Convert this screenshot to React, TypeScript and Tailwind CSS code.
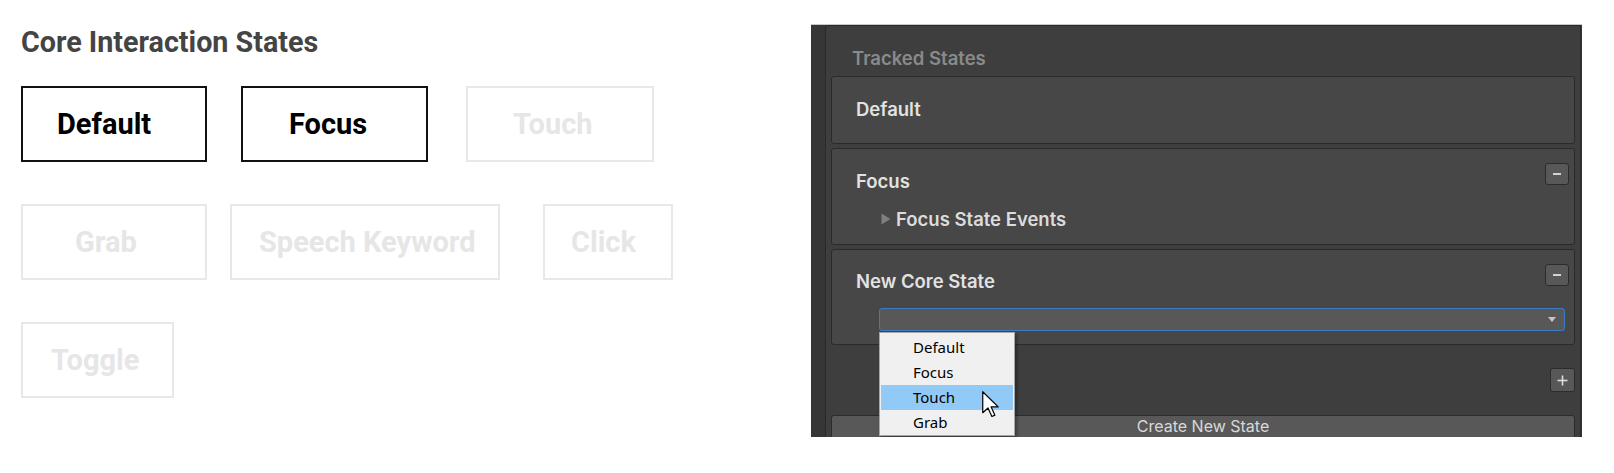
import React from "react";

const roboto = { fontFamily: "Roboto, 'Liberation Sans', sans-serif" };
const inter = { fontFamily: "Inter, 'Noto Sans', sans-serif" };
const noto = { fontFamily: "'Noto Sans', 'Open Sans', sans-serif" };

type Btn = { label: string; w: string; ml: string; pl: string; active?: boolean };

function StateBox({ b }: { b: Btn }) {
  return (
    <div
      className={`flex h-[76px] shrink-0 items-center border-2 ${b.w} ${b.ml} ${b.pl} ${
        b.active ? "border-[#111111] text-black" : "border-[#e8e8e8] text-[#e6e6e6]"
      }`}
    >
      <span className="whitespace-nowrap text-[29px] font-bold leading-[29px]" style={roboto}>
        {b.label}
      </span>
    </div>
  );
}

function MiniButton({ children, w, h }: { children: React.ReactNode; w: string; h: string }) {
  return (
    <div
      className={`flex shrink-0 items-center justify-center rounded-[3px] border border-[#2c2c2c] bg-[#585858] ${w} ${h}`}
    >
      {children}
    </div>
  );
}

function Minus() {
  return (
    <MiniButton w="w-[24px]" h="h-[22px]">
      <div className="h-[2px] w-[8px] bg-[#d2d2d2]" />
    </MiniButton>
  );
}

export default function App() {
  const row1: Btn[] = [
    { label: "Default", w: "w-[186px]", ml: "ml-0", pl: "pl-[34px]", active: true },
    { label: "Focus", w: "w-[187px]", ml: "ml-[34px]", pl: "pl-[46px]", active: true },
    { label: "Touch", w: "w-[188px]", ml: "ml-[38px]", pl: "pl-[45px]" },
  ];
  const row2: Btn[] = [
    { label: "Grab", w: "w-[186px]", ml: "ml-0", pl: "pl-[52px]" },
    { label: "Speech Keyword", w: "w-[270px]", ml: "ml-[23px]", pl: "pl-[27px]" },
    { label: "Click", w: "w-[130px]", ml: "ml-[43px]", pl: "pl-[26px]" },
  ];
  const row3: Btn[] = [{ label: "Toggle", w: "w-[153px]", ml: "ml-0", pl: "pl-[28px]" }];

  return (
    <div className="flex h-[473px] w-[1614px] overflow-hidden bg-white">
      {/* Left: Core interaction states */}
      <div className="w-[811px] shrink-0 pl-[21px] pt-[28px]">
        <h1 className="whitespace-nowrap text-[28.7px] font-bold leading-[28px] text-[#444444]" style={roboto}>
          Core Interaction States
        </h1>
        <div className="mt-[30px] flex flex-col gap-[42px]">
          <div className="flex">
            {row1.map((b) => (
              <StateBox key={b.label} b={b} />
            ))}
          </div>
          <div className="flex">
            {row2.map((b) => (
              <StateBox key={b.label} b={b} />
            ))}
          </div>
          <div className="flex">
            {row3.map((b) => (
              <StateBox key={b.label} b={b} />
            ))}
          </div>
        </div>
      </div>

      {/* Right: Unity-like inspector panel */}
      <div
        className="mt-[24px] flex h-[413px] w-[771px] shrink-0 overflow-hidden border-t border-[#c9c9c9] bg-[#363636]"
        style={inter}
      >
        <div className="w-[14px] shrink-0" />
        <div className="flex w-[756px] shrink-0 flex-col rounded-tl-[4px] border-l border-r border-t border-[#2a2a2a] bg-[#3e3e3e] px-[5px] pt-[23px]">
          <div className="shrink-0 pl-[21px] text-[18.5px] font-semibold leading-[18px] text-[#8a8a8a]">
            Tracked States
          </div>

          {/* Default card */}
          <div className="mt-[9px] h-[68px] shrink-0 rounded-[3px] border border-[#2a2a2a] bg-[#474747] pl-[24px] pt-[23px]">
            <div className="text-[18.5px] font-semibold leading-[18px] text-[#e2e2e2]">Default</div>
          </div>

          {/* Focus card */}
          <div className="mt-[4px] h-[97px] shrink-0 rounded-[3px] border border-[#2a2a2a] bg-[#474747] pr-[5px] pt-[14px]">
            <div className="flex items-start justify-between">
              <div className="mt-[9px] pl-[24px] text-[18.5px] font-semibold leading-[18px] text-[#e2e2e2]">Focus</div>
              <Minus />
            </div>
            <div className="mt-[20px] flex items-center pl-[49px]">
              <svg width="10" height="12" viewBox="0 0 10 12" className="shrink-0">
                <polygon points="0.5,0.5 9.5,6 0.5,11.5" fill="#7f7f7f" />
              </svg>
              <span className="ml-[5px] text-[18.5px] font-semibold leading-[18px] text-[#dcdcdc]">
                Focus State Events
              </span>
            </div>
          </div>

          {/* New Core State card */}
          <div className="relative z-10 mt-[4px] h-[96px] shrink-0 rounded-[3px] border border-[#2a2a2a] bg-[#474747] pr-[5px] pt-[14px]">
            <div className="flex items-start justify-between">
              <div className="mt-[8px] pl-[24px] text-[18.5px] font-semibold leading-[18px] text-[#e2e2e2]">
                New Core State
              </div>
              <Minus />
            </div>
            <div className="relative ml-[47px] mr-[4px] mt-[18px]">
              <div className="flex h-[23px] items-center justify-end rounded-[3px] border border-[#3b7bc6] bg-[#585858] pr-[8px]">
                <svg width="8" height="6" viewBox="0 0 8 6">
                  <polygon points="0,0 8,0 4,5" fill="#c6c6c6" />
                </svg>
              </div>
              {/* Dropdown popup */}
              <div
                className="absolute left-0 top-[24px] z-20 w-[136px] border border-[#a7a7a7] bg-[#f0f0f0] px-[1px] pt-[2px] shadow-[2px_2px_3px_rgba(0,0,0,0.35)]"
                style={noto}
              >
                {["Default", "Focus", "Touch", "Grab"].map((it) => (
                  <div
                    key={it}
                    className={`h-[25px] pl-[32px] text-[15px] leading-[25px] text-black ${
                      it === "Touch" ? "bg-[#91c9f7]" : ""
                    }`}
                  >
                    {it}
                  </div>
                ))}
                <svg
                  className="absolute left-[102px] top-[58px]"
                  width="18"
                  height="27"
                  viewBox="0 0 12 18"
                >
                  <polygon
                    points="0.5,0.5 0.5,14.5 4,11.3 6.6,17 8.6,16.1 6.1,10.6 10.8,10.6"
                    fill="#ffffff"
                    stroke="#000000"
                    strokeWidth="0.8"
                    strokeLinejoin="round"
                  />
                </svg>
              </div>
            </div>
          </div>

          {/* Plus button */}
          <div className="mt-[23px] flex shrink-0 justify-end">
            <MiniButton w="w-[25px]" h="h-[24px]">
              <svg width="11" height="11" viewBox="0 0 11 11">
                <rect x="4.7" y="0.5" width="1.6" height="10" fill="#dcdcdc" />
                <rect x="0.5" y="4.7" width="10" height="1.6" fill="#dcdcdc" />
              </svg>
            </MiniButton>
          </div>

          {/* Create New State */}
          <div className="mt-[23px] flex h-[26px] shrink-0 justify-center rounded-t-[3px] border border-[#2c2c2c] bg-[#585858]">
            <span className="text-[16px] leading-[20px] text-[#d8d8d8]">Create New State</span>
          </div>
        </div>
        <div className="w-[1px] shrink-0" />
      </div>
    </div>
  );
}
